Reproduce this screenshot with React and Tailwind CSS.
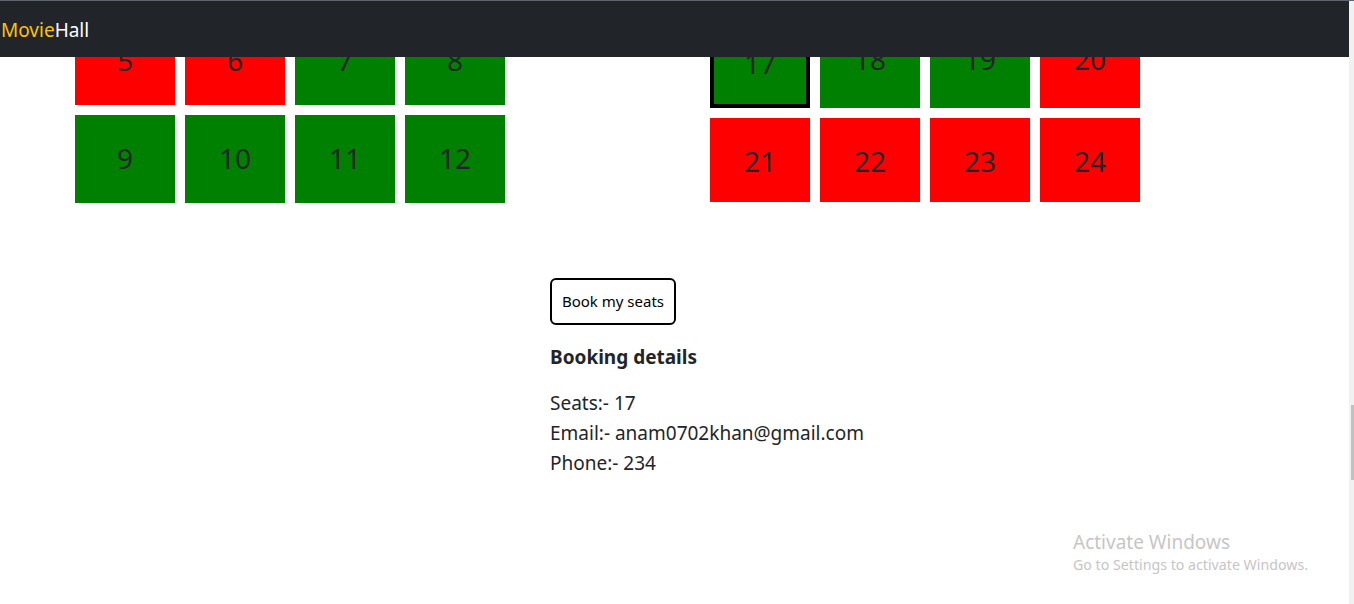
import React from 'react'

const LEFT_ROWS = [
  [{ n: 5, booked: true }, { n: 6, booked: true }, { n: 7 }, { n: 8 }],
  [{ n: 9 }, { n: 10 }, { n: 11 }, { n: 12 }],
]

const RIGHT_ROWS = [
  [{ n: 17, selected: true }, { n: 18 }, { n: 19 }, { n: 20, booked: true }],
  [{ n: 21, booked: true }, { n: 22, booked: true }, { n: 23, booked: true }, { n: 24, booked: true }],
]

function Seat({ seat }) {
  return (
    <div
      className={`w-[100px] box-border flex justify-center pt-[22px] text-[28px] leading-[42px] text-[#212529] ${
        seat.booked ? 'bg-[#ff0000]' : 'bg-[#008000]'
      } ${seat.selected ? 'border-4 border-black pt-[18px]' : ''}`}
    >
      {seat.n}
    </div>
  )
}

export default function App() {
  return (
    <div className="w-[1354px] h-[604px] overflow-hidden bg-white flex flex-col font-['Noto_Sans',sans-serif]">
      <div className="h-px bg-[#5d676f] shrink-0" />
      <div className="flex flex-1 min-h-0">
        <div className="flex-1 relative flex flex-col min-w-0">
          {/* Navbar */}
          <nav className="h-[56px] bg-[#212529] flex items-center shrink-0 relative z-10">
            <span className="pl-px text-[19px] leading-[30px] pt-[1px]">
              <span className="text-[#ffc107]">Movie</span>
              <span className="text-white">Hall</span>
            </span>
          </nav>

          <div className="flex-1 min-h-0">
            {/* Seats */}
            <div className="flex items-start pl-[75px] gap-[205px] mt-[-41px]">
              <div className="flex flex-col gap-[10px] mt-px">
                {LEFT_ROWS.map((row, i) => (
                  <div key={i} className="flex gap-[10px] h-[88px]">
                    {row.map(s => <Seat key={s.n} seat={s} />)}
                  </div>
                ))}
              </div>
              <div className="flex flex-col gap-[10px]">
                <div className="flex gap-[10px] h-[92px]">
                  {RIGHT_ROWS[0].map(s => <Seat key={s.n} seat={s} />)}
                </div>
                <div className="flex gap-[10px] h-[84px]">
                  {RIGHT_ROWS[1].map(s => <Seat key={s.n} seat={s} />)}
                </div>
              </div>
            </div>

            {/* Booking */}
            <div className="pl-[550px] mt-[75px]">
              <button className="w-[126px] h-[47px] border-2 border-black rounded-[6px] text-[15px] text-black bg-white">
                Book my seats
              </button>
              <h5 className="mt-[20px] text-[19px] leading-[24px] font-bold text-[#212529]">Booking details</h5>
              <div className="mt-[19px] text-[19px] leading-[30px] text-[#212529]">
                <div>Seats:- 17</div>
                <div>Email:- anam0702khan@gmail.com</div>
                <div>Phone:- 234</div>
              </div>
            </div>
          </div>

          {/* Windows watermark */}
          <div className="absolute left-[1073px] top-[529px] text-[#c6c6c6] pointer-events-none">
            <div className="text-[19px] leading-[25px]">Activate Windows</div>
            <div className="text-[14.2px] leading-[19px]">Go to Settings to activate Windows.</div>
          </div>
        </div>

        {/* Scrollbar */}
        <div className="w-[5px] bg-[#f1f1f1] shrink-0 flex flex-col">
          <div className="h-[404px]" />
          <div className="h-[75px] w-[3px] ml-auto bg-[#c1c1c1]" />
        </div>
      </div>
    </div>
  )
}
